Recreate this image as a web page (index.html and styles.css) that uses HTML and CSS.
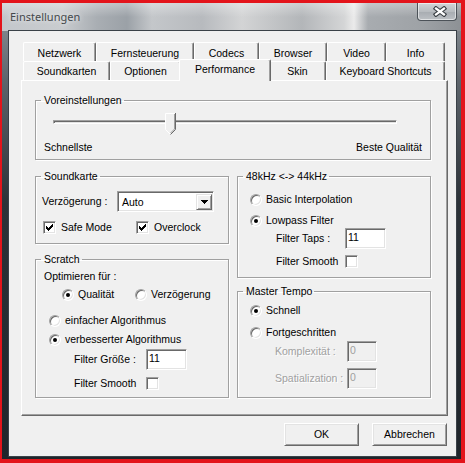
FILE: index.html
```html
<!DOCTYPE html>
<html lang="de">
<head>
<meta charset="utf-8">
<title>Einstellungen</title>
<link rel="stylesheet" href="styles.css">
</head>
<body>
<div class="window">
  <div class="titlebar">
    <span class="title">Einstellungen</span>
    <div class="close">
      <svg width="14" height="11" viewBox="0 0 14 11"><path d="M3 2.5 L11 8.5 M11 2.5 L3 8.5" stroke="#3a3f44" stroke-width="4.4" stroke-linecap="square"/><path d="M3 2.5 L11 8.5 M11 2.5 L3 8.5" stroke="#fff" stroke-width="2.2" stroke-linecap="square"/></svg>
    </div>
  </div>
  <div class="client">
    <div class="tabctl">
      <div class="tabrow row1">
        <div class="tab">Netzwerk</div>
        <div class="tab">Fernsteuerung</div>
        <div class="tab">Codecs</div>
        <div class="tab">Browser</div>
        <div class="tab">Video</div>
        <div class="tab">Info</div>
      </div>
      <div class="tabrow row2">
        <div class="tab">Soundkarten</div>
        <div class="tab">Optionen</div>
        <div class="tab sel">Performance</div>
        <div class="tab">Skin</div>
        <div class="tab">Keyboard Shortcuts</div>
      </div>
      <div class="panel">
        <fieldset class="grp g-preset">
          <legend>Voreinstellungen</legend>
          <div class="slider">
            <div class="track"></div>
            <svg class="thumb" width="11" height="22" viewBox="0 0 11 22">
              <polygon points="1,1 10,1 10,16 5.5,20.5 1,16" fill="#f0f0f0"/>
              <polyline points="0.5,16.5 0.5,0.5 10,0.5" fill="none" stroke="#fff"/>
              <polyline points="0.5,16.5 5.5,21.5" fill="none" stroke="#fff"/>
              <polyline points="10.5,0 10.5,16.5 5.5,21.5" fill="none" stroke="#696969"/>
              <polyline points="9.5,1 9.5,16 5.5,20" fill="none" stroke="#a0a0a0"/>
            </svg>
          </div>
          <div class="slider-labels"><span>Schnellste</span><span>Beste Qualität</span></div>
        </fieldset>
        <div class="cols">
          <div class="col">
            <fieldset class="grp g-sound">
              <legend>Soundkarte</legend>
              <div class="row r-combo">
                <span class="lbl lbl-combo">Verzögerung :</span>
                <div class="combo">
                  <span class="combo-text">Auto</span>
                  <div class="combo-btn"><svg width="7" height="4" viewBox="0 0 7 4"><path d="M0 0h7v1h-7z M1 1h5v1h-5z M2 2h3v1h-3z M3 3h1v1h-1z" fill="#000"/></svg></div>
                </div>
              </div>
              <div class="row r-checks">
                <label class="opt opt-w93"><span class="check"><svg width="9" height="9" viewBox="0 0 9 9"><path d="M1 3h1v3h-1z M2 4h1v3h-1z M3 5h1v3h-1z M4 4h1v3h-1z M5 3h1v3h-1z M6 2h1v3h-1z M7 1h1v3h-1z" fill="#000"/></svg></span>Safe Mode</label>
                <label class="opt"><span class="check"><svg width="9" height="9" viewBox="0 0 9 9"><path d="M1 3h1v3h-1z M2 4h1v3h-1z M3 5h1v3h-1z M4 4h1v3h-1z M5 3h1v3h-1z M6 2h1v3h-1z M7 1h1v3h-1z" fill="#000"/></svg></span>Overclock</label>
              </div>
            </fieldset>
            <fieldset class="grp g-scratch">
              <legend>Scratch</legend>
              <div class="line s-opt">Optimieren für :</div>
              <div class="row s-radios">
                <label class="opt opt-w73"><span class="radio on"></span>Qualität</label>
                <label class="opt"><span class="radio"></span>Verzögerung</label>
              </div>
              <div class="row s-alg1"><label class="opt"><span class="radio"></span>einfacher Algorithmus</label></div>
              <div class="row s-alg2"><label class="opt"><span class="radio on"></span>verbesserter Algorithmus</label></div>
              <div class="row r-edit s-size"><span class="lbl lbl-72">Filter Größe :</span><div class="edit e-41">11</div></div>
              <div class="row s-smooth"><span class="lbl lbl-72">Filter Smooth</span><span class="check"></span></div>
            </fieldset>
          </div>
          <div class="col">
            <fieldset class="grp g-rate">
              <legend>48kHz &lt;-&gt; 44kHz</legend>
              <div class="row k-r1"><label class="opt"><span class="radio"></span>Basic Interpolation</label></div>
              <div class="row k-r2"><label class="opt"><span class="radio on"></span>Lowpass Filter</label></div>
              <div class="row r-edit k-taps"><span class="lbl lbl-69">Filter Taps :</span><div class="edit e-41">11</div></div>
              <div class="row k-smooth"><span class="lbl lbl-69">Filter Smooth</span><span class="check"></span></div>
            </fieldset>
            <fieldset class="grp g-master">
              <legend>Master Tempo</legend>
              <div class="row m-r1"><label class="opt"><span class="radio on"></span>Schnell</label></div>
              <div class="row m-r2"><label class="opt"><span class="radio"></span>Fortgeschritten</label></div>
              <div class="row r-edit m-e1"><span class="lbl lbl-72 disabled">Komplexität :</span><div class="edit e-30 disabled">0</div></div>
              <div class="row r-edit m-e2"><span class="lbl lbl-72 disabled">Spatialization :</span><div class="edit e-30 disabled">0</div></div>
            </fieldset>
          </div>
        </div>
      </div>
    </div>
    <div class="buttons">
      <button class="btn">OK</button>
      <button class="btn">Abbrechen</button>
    </div>
  </div>
</div>
</body>
</html>
```

FILE: styles.css
```css
* { box-sizing: border-box; }
html, body { margin: 0; padding: 0; }
body {
  width: 465px;
  height: 463px;
  overflow: hidden;
  background: #e3141b;
  padding: 3px 4px 4px 2px;
  font-family: "Liberation Sans", Arial, sans-serif;
  font-size: 10.5px;
  line-height: 13px;
  color: #000;
}
.window {
  width: 459px;
  height: 456px;
  display: flex;
  flex-direction: column;
  background:
    linear-gradient(to bottom, rgba(255,255,255,.35), rgba(255,255,255,0) 14px) top / 100% 28px no-repeat,
    linear-gradient(to right, #c3c7cb 0, #c9cccf 60px, #a9aeb3 95px, #9ba1a7 125px, #c4c7ca 150px, #b7babe 200px, #d3d4d5 240px, #b3b6b9 300px, #d4d5d6 342px, #ebebeb 352px, #a8acb0 366px, #9ea2a6 420px, #8d9195 100%) top / 100% 28px no-repeat,
    linear-gradient(to bottom, #8f959b 0, #5c636a 80px, #2c3238 200px, #1f252b 100%);
}
.titlebar {
  height: 27px;
  flex: none;
  display: flex;
  align-items: flex-start;
  padding-left: 8px;
}
.title {
  margin-top: 6px;
  font-family: "Noto Sans", "Open Sans", sans-serif;
  font-size: 11px;
  line-height: 15px;
  color: #44484c;
  text-shadow: 0 0 5px rgba(255,255,255,.9);
}
.close {
  margin-left: auto;
  margin-right: 4px;
  width: 40px;
  height: 18px;
  border: 1px solid #4c5258;
  border-top: none;
  border-radius: 0 0 4px 4px;
  background: linear-gradient(to bottom, #d2d5d8, #b8bcc0 50%, #a7acb1 51%, #bcc0c4);
  box-shadow: inset 0 0 0 1px rgba(255,255,255,.55);
  display: flex;
  align-items: center;
  justify-content: center;
  padding-left: 6px;
}
.close svg { display: block; }
.client {
  margin: 0 4px 2px 6px;
  flex: 1;
  border: 1px solid #3a4148;
  background: #f0f0f0;
  padding: 11px 0 0 12px;
}
.tabctl { width: 427px; }
.tabrow {
  display: grid;
  height: 19px;
  padding-left: 2px;
  position: relative;
}
.row1 { grid-template-columns: 73px 98px 65px 68px 59px 59px; }
.row2 { grid-template-columns: 87px 71px 88px 57px 119px; z-index: 1; }
.tab {
  border-top: 1px solid #fff;
  border-left: 1px solid #fff;
  border-right: 1px solid #696969;
  box-shadow: inset -1px 0 0 #a0a0a0;
  border-radius: 2px 2px 0 0;
  background: #f0f0f0;
  text-align: center;
  white-space: nowrap;
  padding-top: 3px;
}
.row1 .tab { padding-top: 4px; }
.tab.sel {
  margin: -2px -2px -1px -2px;
  position: relative;
  z-index: 2;
}
.panel {
  height: 336px;
  border: 1px solid;
  border-color: #fff #696969 #696969 #fff;
  box-shadow: inset -1px -1px 0 #a0a0a0;
  padding: 13px 16px 0 13px;
}
.grp {
  margin: 0;
  min-width: 0;
  padding: 0 8px 0 8px;
  border: 1px solid #a0a0a0;
  box-shadow: inset 1px 1px 0 #fff, 1px 1px 0 #fff;
}
.grp legend {
  padding: 0 2px 0 3px;
  margin-left: -3px;
  line-height: 13px;
}
.g-preset { height: 66px; }
.slider {
  position: relative;
  height: 22px;
  margin: 6px 25px 0 9px;
}
.track {
  position: relative;
  top: 7px;
  height: 4px;
  border: 1px solid;
  border-color: #a0a0a0 #fff #fff #a0a0a0;
  box-shadow: inset 1px 1px 0 #696969;
  background: #e3e3e3;
}
.thumb {
  position: absolute;
  left: 112px;
  top: 0;
  display: block;
}
.slider-labels {
  display: flex;
  justify-content: space-between;
  margin-top: 6px;
}
.cols {
  display: flex;
  gap: 8px;
  margin-top: 10px;
}
.col { width: 194px; display: flex; flex-direction: column; }
.g-sound { height: 74px; }
.g-scratch { height: 145px; margin-top: 9px; }
.g-rate { height: 108px; }
.g-master { height: 113px; margin-top: 7px; }

.row { display: flex; align-items: center; height: 13px; }
.r-edit, .r-combo { height: 21px; }
.lbl { flex: none; white-space: nowrap; }
.lbl-combo { width: 75px; }
.lbl-72 { width: 72px; }
.lbl-69 { width: 69px; }
.opt { display: flex; align-items: center; gap: 4px; white-space: nowrap; }
.opt-w93 { width: 93px; gap: 5px; }
.opt-w73 { width: 73px; }
.r-checks .opt { gap: 5px; }

.r-combo { margin: 8px 0 0 -2px; }
.combo {
  width: 97px;
  height: 21px;
  border: 1px solid;
  border-color: #a0a0a0 #fff #fff #a0a0a0;
  box-shadow: inset 1px 1px 0 #696969, inset -1px -1px 0 #e3e3e3;
  background: #fff;
  display: flex;
  align-items: stretch;
  padding: 2px 1px 1px 2px;
}
.combo-text { flex: 1; padding-left: 2px; line-height: 17px; }
.combo-btn {
  width: 16px;
  border: 1px solid;
  border-color: #e3e3e3 #696969 #696969 #e3e3e3;
  box-shadow: inset 1px 1px 0 #fff, inset -1px -1px 0 #a0a0a0;
  background: #f0f0f0;
  display: flex;
  align-items: center;
  justify-content: center;
}
.combo-btn svg { display: block; }
.r-checks { margin: 9px 0 0 -1px; }

.check {
  width: 13px;
  height: 13px;
  flex: none;
  border: 1px solid;
  border-color: #a0a0a0 #fff #fff #a0a0a0;
  box-shadow: inset 1px 1px 0 #696969, inset -1px -1px 0 #e3e3e3;
  background: #fff;
  padding: 1px;
}
.check svg { display: block; }
.radio {
  width: 12px;
  height: 12px;
  flex: none;
  border-radius: 50%;
  border: 1px solid;
  border-color: #a0a0a0 #fff #fff #a0a0a0;
  box-shadow: inset 1px 1px 0 #696969, inset -1px -1px 0 #e3e3e3;
  background: #fff;
  position: relative;
}
.radio.on::after {
  content: "";
  position: absolute;
  left: 3px;
  top: 3px;
  width: 4px;
  height: 4px;
  border-radius: 50%;
  background: #000;
}
.edit {
  height: 21px;
  border: 1px solid;
  border-color: #a0a0a0 #fff #fff #a0a0a0;
  box-shadow: inset 1px 1px 0 #696969, inset -1px -1px 0 #e3e3e3;
  background: #fff;
  padding: 2px 2px 0 2px;
  line-height: 13px;
  align-self: flex-start;
}
.e-41 { width: 41px; }
.e-30 { width: 30px; }
.edit.disabled { background: #f0f0f0; color: #a0a0a0; }
.lbl.disabled { color: #a0a0a0; text-shadow: 1px 1px 0 #fff; }

.s-opt { margin-top: 4px; }
.s-radios { margin: 5px 0 0 18px; }
.s-alg1 { margin: 13px 0 0 5px; }
.s-alg2 { margin: 6px 0 0 5px; }
.s-size { margin: 3px 0 0 30px; }
.s-smooth { margin: 7px 0 0 30px; }

.k-r1 { margin: 10px 0 0 4px; }
.k-r2 { margin: 8px 0 0 4px; }
.k-taps { margin: 1px 0 0 30px; }
.k-smooth { margin: 6px 0 0 30px; }

.m-r1 { margin: 6px 0 0 4px; }
.m-r2 { margin: 9px 0 0 4px; }
.m-e1 { margin: 2px 0 0 29px; }
.m-e2 { margin: 6px 0 0 29px; }

.buttons {
  width: 427px;
  display: flex;
  justify-content: flex-end;
  gap: 13px;
  margin-top: 7px;
  padding-right: 1px;
}
.btn {
  width: 75px;
  height: 23px;
  margin: 0;
  padding: 0;
  font: inherit;
  color: #000;
  background: #f0f0f0;
  border: 1px solid;
  border-color: #fff #696969 #696969 #fff;
  box-shadow: inset 1px 1px 0 #e3e3e3, inset -1px -1px 0 #a0a0a0;
  border-radius: 0;
}
```
